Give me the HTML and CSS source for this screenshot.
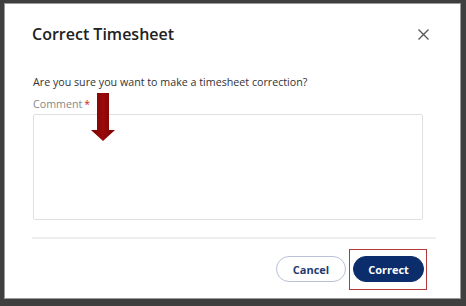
FILE: index.html
```html
<!DOCTYPE html>
<html>
<head>
<meta charset="utf-8">
<link rel="stylesheet" href="styles.css">
</head>
<body>
<div class="frame">
  <div class="dialog">
    <div class="header">
      <h1 class="title">Correct Timesheet</h1>
      <svg class="close" width="11" height="11" viewBox="0 0 11 11"><path d="M0.5 0.5L10.5 10.5M10.5 0.5L0.5 10.5" stroke="#555" stroke-width="1.3" fill="none"/></svg>
    </div>
    <p class="question">Are you sure you want to make a timesheet correction?</p>
    <label class="label">Comment<span class="req">*</span></label>
    <div class="textarea"></div>
    <div class="divider"></div>
    <div class="footer">
      <button class="btn btn-cancel">Cancel</button>
      <button class="btn btn-correct">Correct</button>
    </div>
  </div>
  <svg class="arrow" width="24" height="48" viewBox="0 0 24 48">
    <defs>
      <linearGradient id="g" x1="0" x2="1" y1="0" y2="0">
        <stop offset="0" stop-color="#7a0000"/>
        <stop offset="0.5" stop-color="#9a0a0a"/>
        <stop offset="1" stop-color="#7a0000"/>
      </linearGradient>
    </defs>
    <path d="M6 0H18V37H24L12 48L0 37H6Z" fill="url(#g)"/>
  </svg>
  <div class="highlight"></div>
</div>
</body>
</html>
```
FILE: styles.css
```css
html, body {
  margin: 0;
  padding: 0;
}
body {
  background: #3f3f3f;
  padding: 3px 5px 7px 4px;
  width: 466px;
  height: 306px;
  box-sizing: border-box;
  font-family: "Open Sans", "Liberation Sans", sans-serif;
}
.frame {
  position: relative;
  background: #fff;
  border: 1px solid #9a9a9a;
  height: 100%;
  box-sizing: border-box;
}
.dialog {
  padding: 0 24px 0 27px;
}
.header {
  display: flex;
  justify-content: space-between;
  align-items: center;
  padding-top: 18px;
  padding-right: 7px;
  height: 24px;
}
.title {
  margin: 0;
  font-size: 16px;
  font-weight: 600;
  color: #222;
  line-height: 24px;
}
.close {
  display: block;
}
.question {
  margin: 29px 0 0 1px;
  font-size: 10.7px;
  line-height: 15px;
  color: #333;
}
.label {
  display: block;
  margin: 7px 0 0 1px;
  font-size: 10.7px;
  line-height: 15px;
  color: #888;
}
.req {
  color: #d22;
  margin-left: 2px;
}
.textarea {
  margin: 2px 13px 0 1px;
  height: 104px;
  border: 1px solid #e0e0e0;
  border-radius: 2px;
}
.divider {
  margin: 17px 0 0 0;
  height: 2px;
  background: #eeeeee;
}
.footer {
  display: flex;
  justify-content: flex-end;
  gap: 7px;
  margin-top: 17px;
  padding-right: 12px;
}
.btn {
  font-family: "Open Sans", "Liberation Sans", sans-serif;
  font-size: 11px;
  font-weight: 700;
  height: 26px;
  border-radius: 13px;
  padding: 0;
  box-sizing: border-box;
}
.btn-cancel {
  width: 70px;
  background: #fff;
  border: 1px solid #b7c2d6;
  color: #1f3b6e;
}
.btn-correct {
  width: 71px;
  background: #0b2d6b;
  border: 1px solid #0b2d6b;
  color: #fff;
}
.arrow {
  position: absolute;
  left: 86px;
  top: 89px;
}
.highlight {
  position: absolute;
  left: 344px;
  top: 245px;
  width: 76px;
  height: 39px;
  border: 1px solid #b23a3a;
}
```
